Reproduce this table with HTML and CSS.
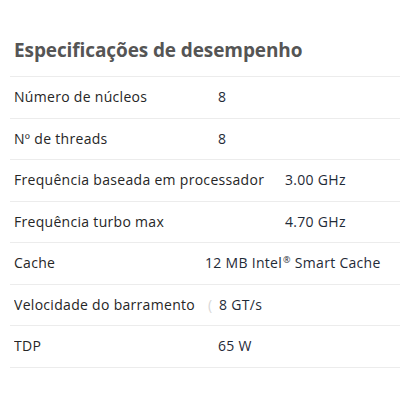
FILE: index.html
```html
<!DOCTYPE html>
<html lang="pt">
<head>
<meta charset="utf-8">
<link rel="stylesheet" href="styles.css">
</head>
<body>
<section class="specs">
  <h2 class="specs-title">Especificações de desempenho</h2>
  <ul class="spec-list">
    <li class="spec-row"><span class="label">Número de núcleos</span><span class="value">8</span></li>
    <li class="spec-row"><span class="label">Nº de threads</span><span class="value">8</span></li>
    <li class="spec-row spec-row--wide"><span class="label">Frequência baseada em processador</span><span class="value">3.00 GHz</span></li>
    <li class="spec-row spec-row--wide"><span class="label">Frequência turbo max</span><span class="value">4.70 GHz</span></li>
    <li class="spec-row spec-row--narrow"><span class="label">Cache</span><span class="value">12 MB Intel<sup class="reg">®</sup> Smart Cache</span></li>
    <li class="spec-row spec-row--info"><span class="label">Velocidade do barramento<span class="info">(</span></span><span class="value">8 GT/s</span></li>
    <li class="spec-row"><span class="label">TDP</span><span class="value">65 W</span></li>
  </ul>
</section>
</body>
</html>
```
FILE: styles.css
```css
html, body {
  margin: 0;
  padding: 0;
  background: #fff;
}
body {
  font-family: "Open Sans", "Noto Sans", sans-serif;
  color: #262626;
}
.specs {
  padding: 36px 0 0 10px;
}
.specs-title {
  margin: 0;
  padding: 0 0 0 4px;
  height: 40px;
  font-size: 19px;
  font-weight: 700;
  line-height: 28px;
  letter-spacing: -0.1px;
  color: #555;
}
.spec-list {
  list-style: none;
  margin: 0;
  padding: 0;
  border-top: 1px solid #ececec;
}
.spec-row {
  display: grid;
  grid-template-columns: 204px 1fr;
  align-items: center;
  height: 40.5px;
  padding-left: 4px;
  border-bottom: 1px solid #ececec;
  font-size: 14px;
  line-height: 20px;
  letter-spacing: 0.3px;
}
.spec-row--wide {
  grid-template-columns: 271px 1fr;
}
.spec-row--narrow {
  grid-template-columns: 191px 1fr;
}
.spec-row--info {
  grid-template-columns: 205px 1fr;
}
.label {
  white-space: nowrap;
  overflow: hidden;
}
.info {
  color: #d8d8d8;
  margin-left: 13px;
}
.value {
  color: #1f2b38;
  white-space: nowrap;
}
.reg {
  font-size: 9px;
  line-height: 0;
  vertical-align: 5px;
  margin-left: 1px;
}
```
